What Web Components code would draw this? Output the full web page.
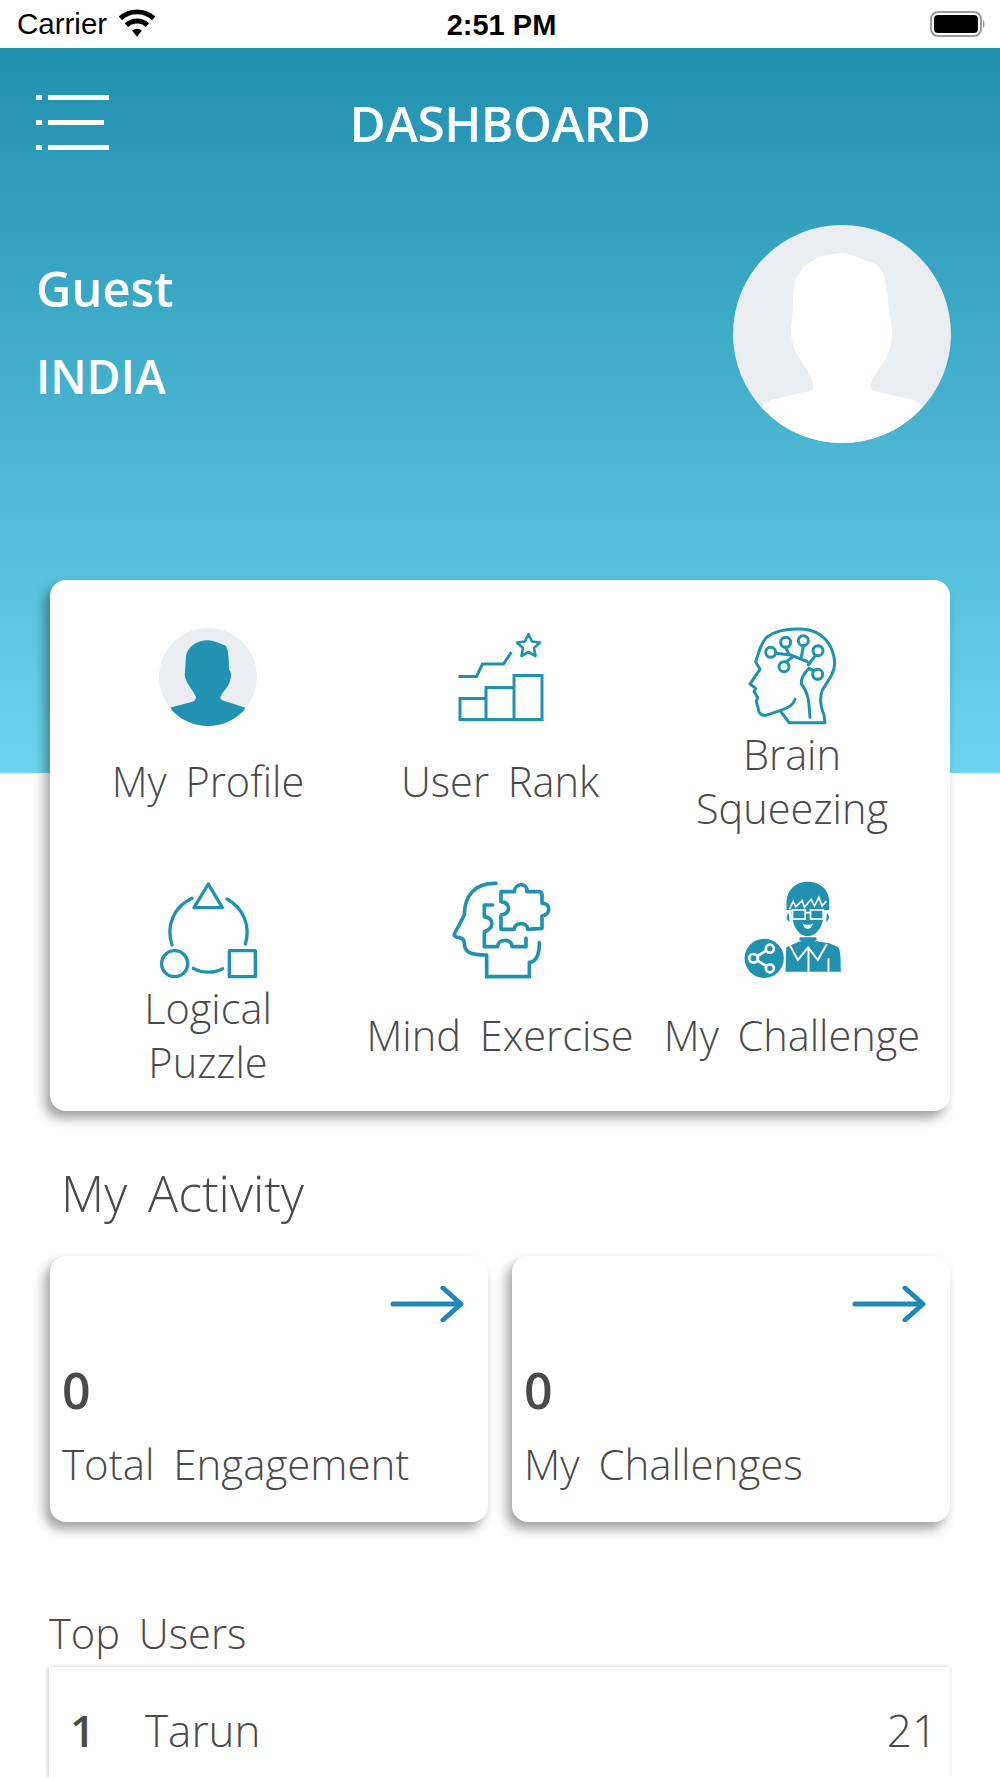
<!DOCTYPE html>
<html lang="en">
<head>
<meta charset="utf-8">
<title>Dashboard</title>
<style>
html, body { margin: 0; padding: 0; background: #fff; overflow: hidden; }
body { height: 100vh; display: flex; flex-direction: column; font-family: "Open Sans", "Liberation Sans", sans-serif; color: #4a4a4a; }
</style>
</head>
<body>
<status-bar></status-bar>
<dash-header name="Guest" country="INDIA"></dash-header>
<feature-card>
    <feature-item label="My Profile"><user-avatar shape="short" bg="#ebeef1" fg="#2292b2" style="width:98px;height:98px;margin-top:8px"></user-avatar></feature-item>
    <feature-item label="User Rank">
        <svg viewBox="439.5 620 120 110" width="120" height="110" fill="none" stroke="#2092b0" stroke-width="3">
            <path d="M459.5 698.5h26v21h-26zM485.5 687.5h28v32h-28zM513.5 675.5h28v44h-28z"/>
            <path d="M458 676.5h18l6-12.500h21l8-12"/>
            <path d="M528 634l3.500 7.500 8 1-6 5.500 1.500 8-7-4-7 4 1.500-8-6-5.500 8-1z" stroke-width="2.600" stroke-linejoin="round"/>
        </svg>
    </feature-item>
    <feature-item label="Brain Squeezing" narrow>
        <svg viewBox="274 30 360 330" width="120" height="110" fill="none" stroke="#2092b0" stroke-width="9" stroke-linecap="round" stroke-linejoin="round">
            <path d="M463 268C460 285 440 295 418 302L375 316C360 318 352 305 352 292L347 275 351 262 340 245 345 235 328 222 358 178 345 155C355 130 358 100 380 80 410 60 450 55 490 58 540 62 580 100 582 160 582 190 560 215 545 240 535 265 540 290 550 315L553 338H445L420 304"/>
            <path d="M508 322C505 280 505 250 482 222 480 205 490 190 505 175L518 182M405 130L450 135 500 155M435 112L445 133M488 107L482 142M524 136L503 165M437 155L460 138"/>
            <circle cx="390" cy="127" r="15"/><circle cx="435" cy="97" r="15"/><circle cx="488" cy="92" r="15"/>
            <circle cx="532" cy="122" r="15"/><circle cx="430" cy="170" r="15"/><circle cx="531" cy="193" r="15"/>
        </svg>
    </feature-item>
    <feature-item label="Logical Puzzle" narrow>
        <svg viewBox="52 42 360 330" width="120" height="110" fill="none" stroke="#2092b0" stroke-width="10" stroke-linejoin="round" stroke-linecap="round">
            <path d="M233 72L190 143H275Z"/>
            <path d="M184 115C130 140 105 195 124 255M289 117C340 145 360 200 344 252M188 325C215 340 250 340 276 326"/>
            <circle cx="132" cy="311" r="39"/><rect x="296" y="272" width="78" height="78"/>
        </svg>
    </feature-item>
    <feature-item label="Mind Exercise">
        <svg viewBox="27 42 360 330" width="120" height="110" fill="none" stroke="#2092b0" stroke-width="11" stroke-linejoin="round" stroke-linecap="round">
            <path d="M195 70C130 68 100 110 100 165L70 222C68 228 75 232 85 233 95 235 100 240 100 250 100 275 115 285 167 285V350H295V307C315 305 325 285 325 248"/>
            <path d="M210 95H250C250 70 290 65 288 95H325C330 95 333 100 333 105V130C360 128 360 165 333 168V205L290 208C290 185 250 185 250 208H210V165C240 160 240 130 210 125Z"/>
            <path d="M185 135H160V170C190 175 190 205 160 215V260H200C200 235 245 235 243 260H285V235"/>
        </svg>
    </feature-item>
    <feature-item label="My Challenge">
        <svg viewBox="34.500 42 360 330" width="120" height="110" fill="#2092b0">
            <path d="M198 135C196 85 230 65 262 65 300 65 330 90 326 135V150H312C308 205 288 228 262 228 236 228 216 205 212 150H198Z"/>
            <path d="M205 160C196 165 196 180 207 186ZM319 160C328 165 328 180 317 186Z"/>
            <path d="M207 148L218 124 226 140 245 122 252 142 272 118 282 138 295 112 305 138 318 122" fill="none" stroke="#fff" stroke-width="5"/>
            <g fill="none" stroke="#fff" stroke-width="5">
                <rect x="216" y="150" width="38" height="27"/><rect x="270" y="150" width="38" height="27"/>
                <path d="M200 153H216M254 158H270M308 153H324"/>
            </g>
            <path d="M246 190C252 212 272 212 278 190 268 196 256 196 246 190Z" fill="#fff"/>
            <path d="M237 232H288V240L263 254 237 240ZM197 262L238 244H287L326 250 350 260C358 265 361 275 361 335H195Z"/>
            <path d="M206 252L232 300 263 262 292 300 319 252M264 264V335M324 295V335" fill="none" stroke="#fff" stroke-width="6"/>
            <circle cx="131" cy="295" r="59"/>
            <g fill="none" stroke="#fff" stroke-width="8">
                <circle cx="99" cy="295" r="13"/><circle cx="148" cy="266" r="12"/><circle cx="148" cy="325" r="12"/>
                <path d="M111 288L137 272M111 302L137 318"/>
            </g>
        </svg>
    </feature-item>
</feature-card>
<section-title size="50" left="61" top="50">My Activity</section-title>
<activity-row>
    <activity-card count="0" label="Total Engagement"></activity-card>
    <activity-card count="0" label="My Challenges"></activity-card>
</activity-row>
<section-title size="41.600" left="49" top="84">Top Users</section-title>
<top-users>
    <user-row rank="1" name="Tarun" score="21"></user-row>
</top-users>

<script>
class StatusBar extends HTMLElement {
    connectedCallback() {
        this.attachShadow({ mode: 'open' }).innerHTML = `
            <style>
                :host { display: grid; grid-template-columns: 1fr auto 1fr; align-items: center; height: 48px; padding: 0 14px 0 17px; background: #fff; color: #000; font-family: "Liberation Sans", sans-serif; box-sizing: border-box; }
                .left { display: flex; align-items: center; gap: 10px; font-size: 29.5px; }
                .time { font-size: 29px; font-weight: 700; padding-top: 2px; }
                svg { display: block; }
                .battery { justify-self: end; }
            </style>
            <div class="left">
                <span>Carrier</span>
                <svg width="40" height="31" viewBox="0 0 36 28">
                    <path d="M18 25l-4.500-5.500a7 7 0 0 1 9 0z" fill="#000"/>
                    <path d="M8.500 14.500a14 14 0 0 1 19 0M3 8.500a22 22 0 0 1 30 0" fill="none" stroke="#000" stroke-width="4.500"/>
                </svg>
            </div>
            <div class="time">2:51 PM</div>
            <svg class="battery" width="57" height="26" viewBox="0 0 55 26">
                <rect x="1" y="1" width="50" height="24" rx="7" fill="none" stroke="#999" stroke-width="2"/>
                <rect x="4" y="4" width="44" height="18" rx="4" fill="#000"/>
                <path d="M53 9c2 .8 2 7.200 0 8z" fill="#999"/>
            </svg>
        `;
    }
}
customElements.define('status-bar', StatusBar);

// two silhouettes: long hair for the big picture, short hair for the menu icon
const AVATAR_PATHS = {
    long: 'M50 13C55 13 59 16 63 17 69 19 70 24 70.500 30L72 42C74 50 73 57 69 63 66 67 64 70 63 74 63 75 64 76 66 76.500L82 80C85 81 87 83 88 86V100H12V86C13 83 15 81 18 80L34 76.500C36 76 37 75 37 74 36 70 34 66 31 62 27 56 26 50 27 43 28 38 27 34 28 28 30 19 38 13 50 13Z',
    short: 'M50 12.400C56 12.400 62 16 67 17.500 70 19 70.500 25 71 30L71.500 42C74 45 74 49 73 52 72 58 68 62 65 66 63 69 62 71 63 72.500L65 74 87.600 81V100H12V81L35 75C37 74 38 72 37.500 70 36 66 31 60 28.500 55 27 52 25.500 48 26.500 45L27.500 30C28 20 38 12.400 50 12.400Z'
};

class UserAvatar extends HTMLElement {
    connectedCallback() {
        const bg = this.getAttribute('bg');
        const fg = this.getAttribute('fg');
        const d = AVATAR_PATHS[this.getAttribute('shape') || 'long'];
        const id = 'c' + Math.random().toString(36).slice(2);
        this.attachShadow({ mode: 'open' }).innerHTML = `
            <style>:host { display: block; } svg { display: block; width: 100%; height: 100%; }</style>
            <svg viewBox="0 0 100 100">
                <clipPath id="${id}"><circle cx="50" cy="50" r="50"/></clipPath>
                <circle cx="50" cy="50" r="50" fill="${bg}"/>
                <path clip-path="url(#${id})" fill="${fg}" d="${d}"/>
            </svg>
        `;
    }
}
customElements.define('user-avatar', UserAvatar);

class DashHeader extends HTMLElement {
    connectedCallback() {
        this.attachShadow({ mode: 'open' }).innerHTML = `
            <style>
                :host { display: block; height: 725px; box-sizing: border-box; padding: 45px 49px 0 36px; color: #fff; background: linear-gradient(#2090af, #6dd5ef); font-family: "Open Sans", sans-serif; }
                .top { display: grid; grid-template-columns: 73px 1fr 73px; align-items: start; margin-right: -13px; }
                h1 { margin: 0; text-align: center; font-size: 49.500px; font-weight: 600; line-height: 60px; letter-spacing: -.5px; }
                .menu { display: flex; flex-direction: column; justify-content: space-between; height: 55px; margin-top: 2px; }
                .menu i { display: flex; gap: 6px; height: 5px; }
                .menu i::before { content: ""; width: 6px; background: #fff; }
                .menu i::after { content: ""; flex: 1; background: #fff; }
                .menu i:nth-child(2) { margin-right: 5px; }
                .info { display: flex; justify-content: space-between; align-items: flex-start; margin-top: 72px; }
                .names { padding-top: 19px; font-weight: 600; line-height: 88px; }
                .name { font-size: 48.800px; }
                .country { font-size: 46.500px; }
                user-avatar { width: 218px; height: 218px; }
            </style>
            <div class="top">
                <div class="menu"><i></i><i></i><i></i></div>
                <h1>DASHBOARD</h1>
                <div></div>
            </div>
            <div class="info">
                <div class="names"><div class="name">${this.getAttribute('name')}</div><div class="country">${this.getAttribute('country')}</div></div>
                <user-avatar bg="#ebeef1" fg="#fff"></user-avatar>
            </div>
        `;
    }
}
customElements.define('dash-header', DashHeader);

class FeatureCard extends HTMLElement {
    connectedCallback() {
        this.attachShadow({ mode: 'open' }).innerHTML = `
            <style>
                :host { display: grid; grid-template-columns: repeat(3, 292px); grid-auto-rows: 254px; justify-content: center; margin: -193px 50px 0; height: 531px; padding-top: 40px; box-sizing: border-box; background: #fff; border-radius: 16px; box-shadow: -5px 7px 12px rgba(0,0,0,.38); position: relative; }
            </style>
            <slot></slot>
        `;
    }
}
customElements.define('feature-card', FeatureCard);

class FeatureItem extends HTMLElement {
    connectedCallback() {
        const width = this.hasAttribute('narrow') ? 210 : 290;
        this.attachShadow({ mode: 'open' }).innerHTML = `
            <style>
                :host { display: flex; flex-direction: column; align-items: center; }
                .icon { height: 110px; width: 120px; display: flex; align-items: flex-start; justify-content: center; }
                .label { height: 108px; margin-top: -3px; width: ${width}px; display: flex; align-items: center; justify-content: center; text-align: center; font-size: 41.500px; line-height: 54px; font-weight: 300; word-spacing: 8px; }
            </style>
            <div class="icon"><slot></slot></div>
            <div class="label">${this.getAttribute('label')}</div>
        `;
    }
}
customElements.define('feature-item', FeatureItem);

class SectionTitle extends HTMLElement {
    connectedCallback() {
        const size = this.getAttribute('size');
        this.attachShadow({ mode: 'open' }).innerHTML = `
            <style>
                :host { display: block; margin: ${this.getAttribute('top')}px 0 0 ${this.getAttribute('left')}px; font-size: ${size}px; line-height: 1.300; font-weight: 300; word-spacing: 8px; }
            </style>
            <slot></slot>
        `;
    }
}
customElements.define('section-title', SectionTitle);

class ActivityRow extends HTMLElement {
    connectedCallback() {
        this.attachShadow({ mode: 'open' }).innerHTML = `
            <style>:host { display: grid; grid-template-columns: 1fr 1fr; gap: 24px; margin: 30px 50px 0; }</style>
            <slot></slot>
        `;
    }
}
customElements.define('activity-row', ActivityRow);

class ActivityCard extends HTMLElement {
    connectedCallback() {
        this.attachShadow({ mode: 'open' }).innerHTML = `
            <style>
                :host { display: block; height: 266px; box-sizing: border-box; padding: 30px 24px 0 12px; background: #fff; border-radius: 16px; box-shadow: -5px 7px 12px rgba(0,0,0,.38); }
                svg { display: block; margin-left: auto; }
                .count { margin-top: 38px; font-size: 50px; line-height: 60px; font-weight: 600; }
                .label { margin-top: 17px; font-size: 42px; line-height: 54px; font-weight: 300; word-spacing: 8px; }
            </style>
            <svg width="74" height="36" viewBox="0 0 74 36" fill="none" stroke="#1f88b4" stroke-width="5" stroke-linecap="round" stroke-linejoin="round">
                <path d="M3 18H70M53 2L71 18 53 34"/>
            </svg>
            <div class="count">${this.getAttribute('count')}</div>
            <div class="label">${this.getAttribute('label')}</div>
        `;
    }
}
customElements.define('activity-card', ActivityCard);

class TopUsers extends HTMLElement {
    connectedCallback() {
        this.attachShadow({ mode: 'open' }).innerHTML = `
            <style>:host { display: block; flex: 1; min-height: 0; margin: 7px 50px 0 49px; background: #fff; box-shadow: -1px 0 4px rgba(0,0,0,.22); }</style>
            <slot></slot>
        `;
    }
}
customElements.define('top-users', TopUsers);

class UserRow extends HTMLElement {
    connectedCallback() {
        this.attachShadow({ mode: 'open' }).innerHTML = `
            <style>
                :host { display: grid; grid-template-columns: 75px 1fr auto; align-items: center; padding: 35px 13px 0 21px; line-height: 56px; font-size: 44px; font-weight: 300; }
                b { font-weight: 600; }
            </style>
            <b>${this.getAttribute('rank')}</b>
            <span>${this.getAttribute('name')}</span>
            <span>${this.getAttribute('score')}</span>
        `;
    }
}
customElements.define('user-row', UserRow);
</script>
</body>
</html>
